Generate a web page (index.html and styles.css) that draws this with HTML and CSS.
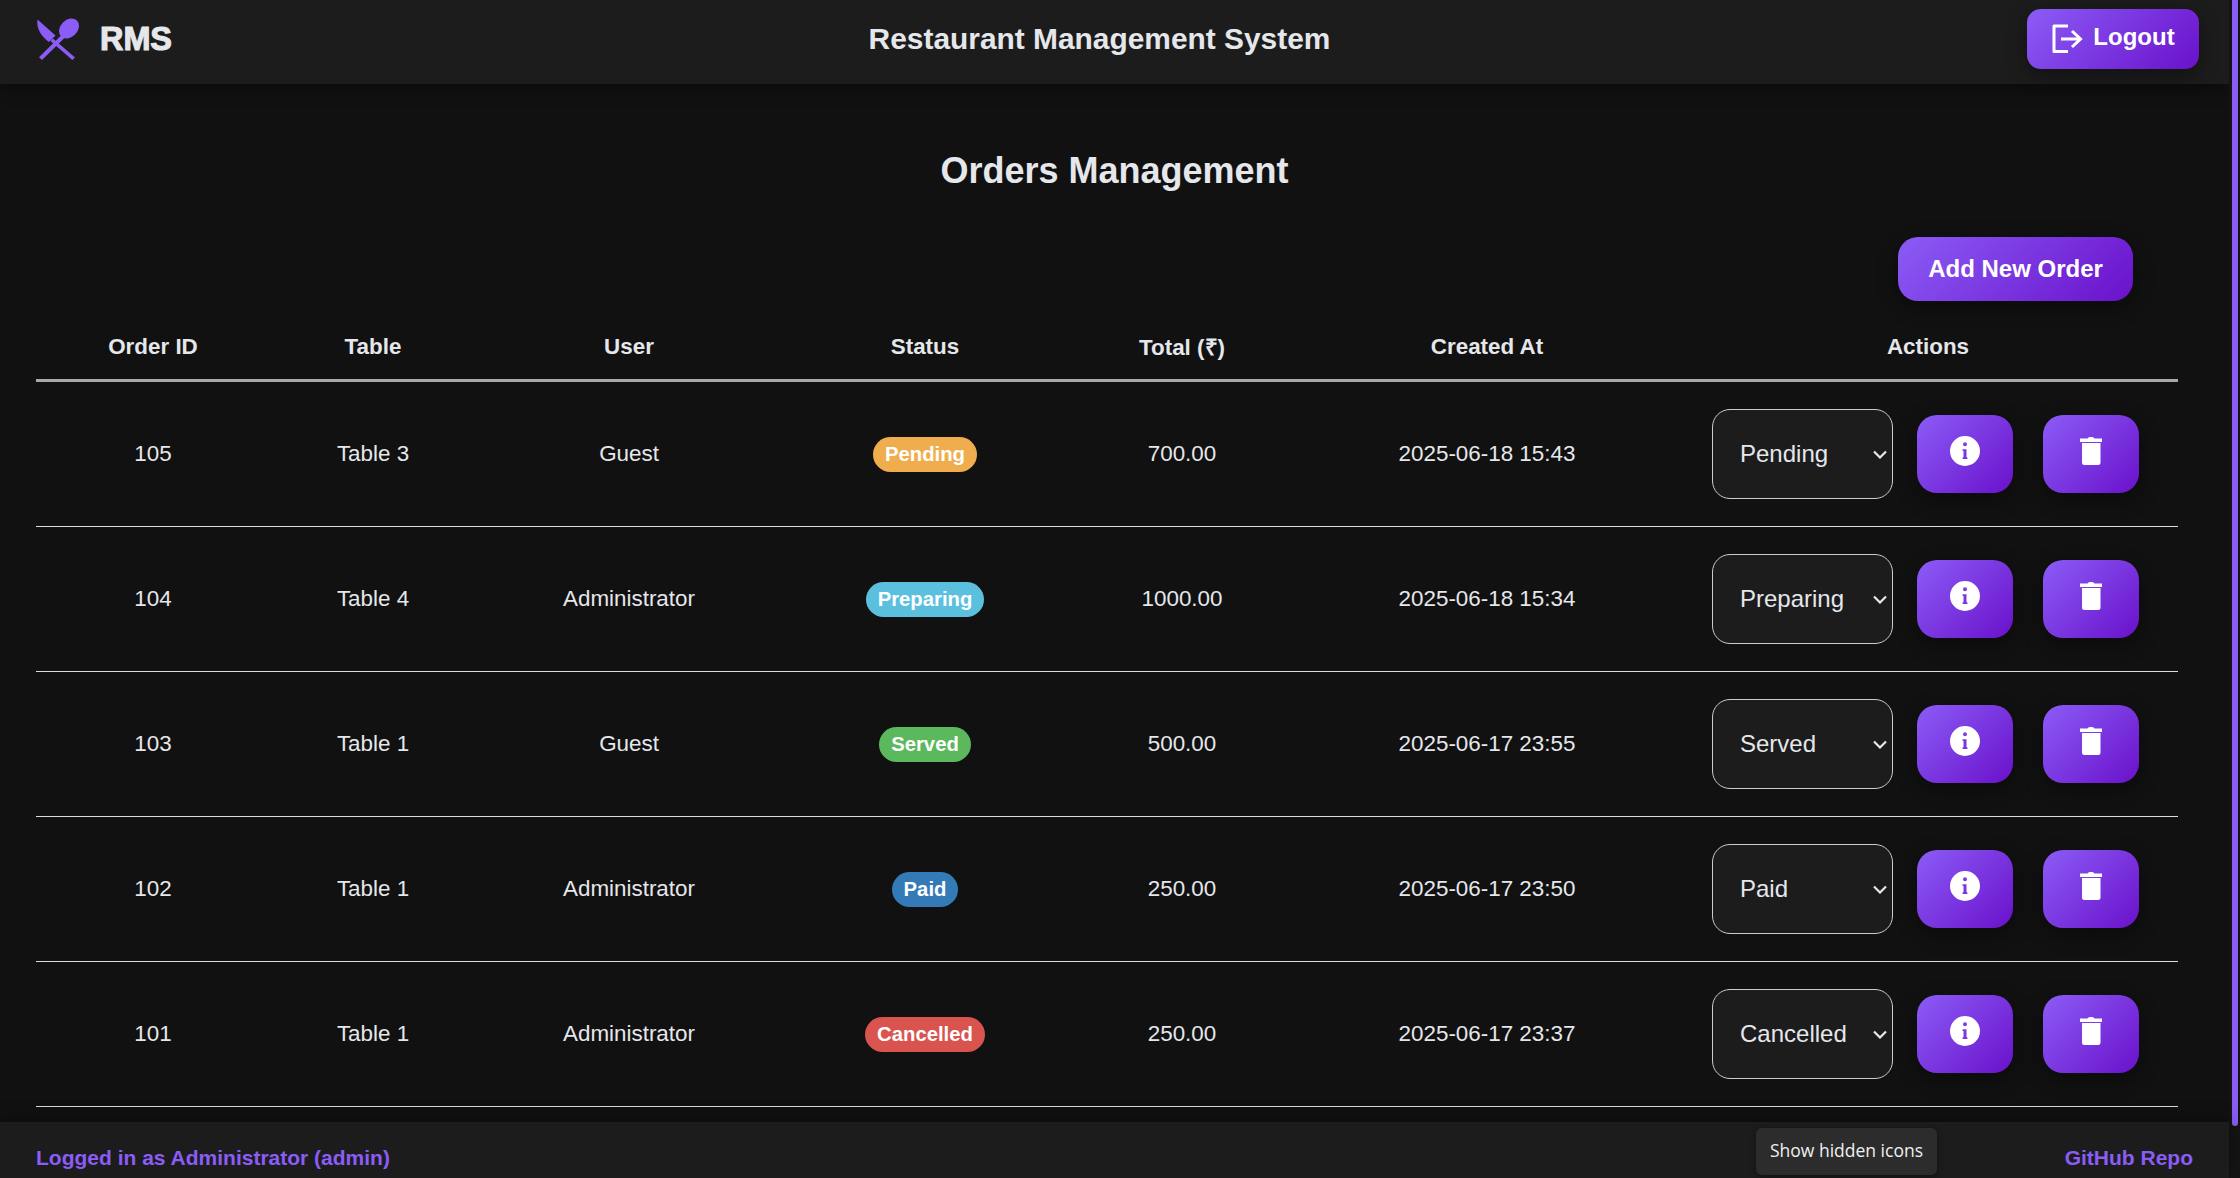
FILE: index.html
```html
<!DOCTYPE html>
<html lang="en">
  <head>
    <meta charset="UTF-8" />
    <meta name="viewport" content="width=device-width, initial-scale=1.0" />
    <title>Restaurant Management System</title>
    <link rel="stylesheet" href="styles.css">
  </head>
  <body>
    <div class="page">
      <div class="header">
        <div class="brand">
          <svg class="logo" viewBox="0 0 44 42" width="44" height="42">
            <path d="M1.5 1.5 L19.5 17.5 L13 24 C6 19 0 11 1.5 1.5 Z" fill="#8b5cf6" />
            <path d="M17 20.5 L39 39.5 L36.3 42 L14.5 23 Z" fill="#8b5cf6" />
            <ellipse cx="33" cy="10.5" rx="11.2" ry="8.6" transform="rotate(-45 33 10.5)" fill="#8b5cf6" />
            <path d="M26 16.5 L29 19.5 L6 42 L3 39.3 Z" fill="#8b5cf6" />
          </svg>
          <span class="brand-name">RMS</span>
        </div>
        <h1>Restaurant Management System</h1>
        <button class="button logout">
          <svg viewBox="0 0 32 30" width="32" height="30" fill="none" stroke="#fff" stroke-width="3">
            <path d="M17 2 H3 V27.5 H17" stroke-linejoin="round" />
            <path d="M10 15 H29 M21 7 L29.5 15 L21 23" />
          </svg>
          <span>Logout</span>
        </button>
      </div>

      <div class="main">
        <h2>Orders Management</h2>
        <div class="toolbar">
          <button class="button add-order">Add New Order</button>
        </div>
        <table class="orders">
          <colgroup>
            <col class="col-id" />
            <col class="col-table" />
            <col class="col-user" />
            <col class="col-status" />
            <col class="col-total" />
            <col class="col-created" />
            <col class="col-actions" />
          </colgroup>
          <thead>
            <tr>
              <th>Order ID</th>
              <th>Table</th>
              <th>User</th>
              <th>Status</th>
              <th>Total (₹)</th>
              <th>Created At</th>
              <th>Actions</th>
            </tr>
          </thead>
          <tbody>
            <tr>
              <td>105</td>
              <td>Table 3</td>
              <td>Guest</td>
              <td><span class="badge pending">Pending</span></td>
              <td>700.00</td>
              <td>2025-06-18 15:43</td>
              <td>
                <div class="actions">
                  <select class="status-select">
                    <option selected>Pending</option>
                    <option>Preparing</option>
                    <option>Served</option>
                    <option>Paid</option>
                    <option>Cancelled</option>
                  </select>
                  <button class="button icon-btn"><svg viewBox="0 0 30 30" width="30" height="30"><use href="#info" /></svg></button>
                  <button class="button icon-btn"><svg viewBox="0 0 22 28" width="22" height="28"><use href="#trash" /></svg></button>
                </div>
              </td>
            </tr>
            <tr>
              <td>104</td>
              <td>Table 4</td>
              <td>Administrator</td>
              <td><span class="badge preparing">Preparing</span></td>
              <td>1000.00</td>
              <td>2025-06-18 15:34</td>
              <td>
                <div class="actions">
                  <select class="status-select">
                    <option>Pending</option>
                    <option selected>Preparing</option>
                    <option>Served</option>
                    <option>Paid</option>
                    <option>Cancelled</option>
                  </select>
                  <button class="button icon-btn"><svg viewBox="0 0 30 30" width="30" height="30"><use href="#info" /></svg></button>
                  <button class="button icon-btn"><svg viewBox="0 0 22 28" width="22" height="28"><use href="#trash" /></svg></button>
                </div>
              </td>
            </tr>
            <tr>
              <td>103</td>
              <td>Table 1</td>
              <td>Guest</td>
              <td><span class="badge served">Served</span></td>
              <td>500.00</td>
              <td>2025-06-17 23:55</td>
              <td>
                <div class="actions">
                  <select class="status-select">
                    <option>Pending</option>
                    <option>Preparing</option>
                    <option selected>Served</option>
                    <option>Paid</option>
                    <option>Cancelled</option>
                  </select>
                  <button class="button icon-btn"><svg viewBox="0 0 30 30" width="30" height="30"><use href="#info" /></svg></button>
                  <button class="button icon-btn"><svg viewBox="0 0 22 28" width="22" height="28"><use href="#trash" /></svg></button>
                </div>
              </td>
            </tr>
            <tr>
              <td>102</td>
              <td>Table 1</td>
              <td>Administrator</td>
              <td><span class="badge paid">Paid</span></td>
              <td>250.00</td>
              <td>2025-06-17 23:50</td>
              <td>
                <div class="actions">
                  <select class="status-select">
                    <option>Pending</option>
                    <option>Preparing</option>
                    <option>Served</option>
                    <option selected>Paid</option>
                    <option>Cancelled</option>
                  </select>
                  <button class="button icon-btn"><svg viewBox="0 0 30 30" width="30" height="30"><use href="#info" /></svg></button>
                  <button class="button icon-btn"><svg viewBox="0 0 22 28" width="22" height="28"><use href="#trash" /></svg></button>
                </div>
              </td>
            </tr>
            <tr>
              <td>101</td>
              <td>Table 1</td>
              <td>Administrator</td>
              <td><span class="badge cancelled">Cancelled</span></td>
              <td>250.00</td>
              <td>2025-06-17 23:37</td>
              <td>
                <div class="actions">
                  <select class="status-select">
                    <option>Pending</option>
                    <option>Preparing</option>
                    <option>Served</option>
                    <option>Paid</option>
                    <option selected>Cancelled</option>
                  </select>
                  <button class="button icon-btn"><svg viewBox="0 0 30 30" width="30" height="30"><use href="#info" /></svg></button>
                  <button class="button icon-btn"><svg viewBox="0 0 22 28" width="22" height="28"><use href="#trash" /></svg></button>
                </div>
              </td>
            </tr>
          </tbody>
        </table>
      </div>

      <div class="footer">
        <span>Logged in as Administrator (admin)</span>
        <a href="#">GitHub Repo</a>
        <div class="tooltip">Show hidden icons</div>
      </div>
    </div>

    <div class="scrollbar"><div class="scrollbar-thumb"></div></div>

    <svg class="icon-defs" width="0" height="0">
      <defs>
        <path id="info" fill="#fff" fill-rule="evenodd" d="M15 0 A15 15 0 1 1 15 30 A15 15 0 1 1 15 0 Z M15 6.2 A2 2 0 1 0 15 10.2 A2 2 0 1 0 15 6.2 Z M12.6 13.2 V15 H13.5 V21.2 H12.6 V23 H17.4 V21.2 H16.5 V13.2 Z" />
        <path id="trash" fill="#fff" d="M7.5 1.5 Q8 0 10 0 H12 Q14 0 14.5 1.5 H22 V5 H0 V1.5 Z M2 6 H20.5 V25.5 Q20.5 28 18 28 H4.5 Q2 28 2 25.5 Z" />
      </defs>
    </svg>
  </body>
</html>
```

FILE: styles.css
```css
* {
  box-sizing: border-box;
}
body {
  font-family: "Liberation Sans", Arial, sans-serif;
  background-color: #111111;
  color: #e5e7eb;
  margin: 0;
  padding: 0;
  height: 100vh;
  overflow: hidden;
  display: flex;
}
.page {
  flex: 1;
  min-width: 0;
  height: 100vh;
  display: flex;
  flex-direction: column;
}
.header {
  height: 84px;
  flex-shrink: 0;
  display: flex;
  align-items: center;
  justify-content: space-between;
  padding: 0 30px 6px 36px;
  background-color: #1c1c1c;
  box-shadow: 0 4px 16px rgba(0, 0, 0, 0.4);
}
.brand {
  display: flex;
  align-items: center;
  gap: 20px;
}
.brand-name {
  font-size: 32.4px;
  font-weight: 700;
  -webkit-text-stroke: 1.1px #e5e7eb;
}
.header h1 {
  margin: 0;
  font-size: 29.9px;
  font-weight: 700;
}
.button {
  color: white;
  border: none;
  cursor: pointer;
  font-family: inherit;
  font-weight: 700;
  background: linear-gradient(135deg, #8b5cf6, #6a11cb);
  box-shadow: 0 6px 20px rgba(0, 0, 0, 0.4);
}
.logout {
  width: 172px;
  height: 60px;
  border-radius: 14px;
  font-size: 24px;
  display: flex;
  align-items: center;
  justify-content: center;
  gap: 10px;
  padding: 0 0 5px;
}
.logout svg {
  margin-top: 5px;
}
.main {
  flex: 1;
  min-height: 0;
  padding: 0 36px;
}
.main h2 {
  margin: 65px 0 0;
  height: 44px;
  line-height: 44px;
  text-align: center;
  font-size: 36px;
  font-weight: 700;
}
.toolbar {
  display: flex;
  justify-content: flex-end;
  padding-right: 60px;
  margin-top: 44px;
}
.add-order {
  width: 235px;
  height: 64px;
  border-radius: 20px;
  font-size: 24px;
}
.orders {
  width: 2142px;
  table-layout: fixed;
  border-collapse: separate;
  border-spacing: 0;
  margin-top: 11px;
  font-size: 22.4px;
}
.col-id { width: 234px; }
.col-table { width: 206px; }
.col-user { width: 306px; }
.col-status { width: 286px; }
.col-total { width: 228px; }
.col-created { width: 382px; }
.col-actions { width: 500px; }
.orders th {
  height: 70px;
  padding: 2px 0 0;
  text-align: center;
  font-weight: 700;
  border-bottom: 3px solid #a8a8a8;
}
.orders td {
  height: 145px;
  padding: 0;
  text-align: center;
  border-bottom: 1px solid #dddddd;
}
.badge {
  display: inline-block;
  height: 35px;
  line-height: 35px;
  padding: 0 12px;
  border-radius: 18px;
  color: white;
  font-size: 20.3px;
  font-weight: 700;
}
.pending { background-color: #f0ad4e; }
.preparing { background-color: #5bc0de; }
.served { background-color: #5cb85c; }
.paid { background-color: #337ab7; }
.cancelled { background-color: #d9534f; }
.actions {
  display: flex;
  align-items: center;
  padding-left: 34px;
  gap: 30px;
}
.status-select {
  appearance: none;
  width: 181px;
  height: 90px;
  margin-right: -6px;
  padding: 0 0 1px 27px;
  background-color: #1c1c1c;
  background-image: url("data:image/svg+xml,%3Csvg xmlns='http://www.w3.org/2000/svg' width='14' height='9' fill='none' stroke='%23e5e7eb' stroke-width='2.2'%3E%3Cpath d='M1 1.5 L7 7.5 L13 1.5'/%3E%3C/svg%3E");
  background-repeat: no-repeat;
  background-position: right 5px center;
  color: #e5e7eb;
  border: 1px solid #cccccc;
  border-radius: 18px;
  font-family: inherit;
  font-size: 24px;
}
.icon-btn {
  width: 96px;
  height: 78px;
  border-radius: 20px;
  padding: 0 0 6px;
  display: flex;
  align-items: center;
  justify-content: center;
}
.footer {
  position: relative;
  height: 56px;
  flex-shrink: 0;
  display: flex;
  align-items: center;
  justify-content: space-between;
  padding: 16px 36px 0;
  background-color: #1c1c1c;
  box-shadow: 0 -4px 16px rgba(0, 0, 0, 0.3);
  font-size: 21px;
  font-weight: 700;
  color: #8b5cf6;
}
.footer a {
  color: #8b5cf6;
  text-decoration: none;
}
.tooltip {
  position: absolute;
  top: 6px;
  left: 1756px;
  width: 181px;
  height: 47px;
  line-height: 45px;
  text-align: center;
  background-color: #2c2c2c;
  border-radius: 6px;
  box-shadow: 0 2px 6px rgba(0, 0, 0, 0.4);
  font-family: "Open Sans", sans-serif;
  font-size: 17.5px;
  font-weight: 400;
  color: #f0f0f0;
}
.scrollbar {
  width: 11px;
  flex-shrink: 0;
  height: 100vh;
  padding: 0 2px 0 3px;
  background-color: #141414;
}
.scrollbar-thumb {
  height: 1126px;
  background-color: #8b5cf6;
  border-radius: 0 0 3px 3px;
}
.icon-defs {
  position: absolute;
}
```
